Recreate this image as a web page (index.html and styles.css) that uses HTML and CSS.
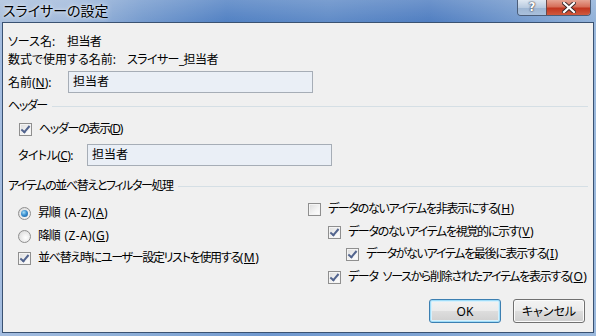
FILE: index.html
```html
<!DOCTYPE html>
<html lang="ja">
<head>
<meta charset="utf-8">
<link rel="stylesheet" href="styles.css">
</head>
<body>
<div class="window">
  <div class="titlebar">
    <div class="title">スライサーの設定</div>
    <div class="caption-buttons">
      <div class="cap-btn help">?</div>
      <div class="cap-btn close">
        <svg width="14" height="11" viewBox="0 0 14 11"><path d="M2 1 L12 10 M12 1 L2 10" stroke="#3a2a2a" stroke-width="4" stroke-linecap="square"/><path d="M2 1 L12 10 M12 1 L2 10" stroke="#ffffff" stroke-width="2.2" stroke-linecap="square"/></svg>
      </div>
    </div>
  </div>
  <div class="client">
    <div class="row"><span class="lbl w59">ソース名:</span><span class="kana">担当者</span></div>
    <div class="row"><span class="lbl w119">数式で使用する名前:</span><span class="kana">スライサー_担当者</span></div>
    <div class="field-row name-row"><span class="lbl w60">名前(<u>N</u>):</span><div class="input">担当者</div></div>

    <div class="group group-header"><span class="group-label">ヘッダー</span><span class="group-line"></span></div>
    <div class="opt indent1 show-header"><span class="cb checked"></span><span>ヘッダーの表示(<u>D</u>)</span></div>
    <div class="field-row title-row"><span class="lbl w69 kana">タイトル(<u>C</u>):</span><div class="input">担当者</div></div>

    <div class="group group-sort"><span class="group-label">アイテムの並べ替えとフィルター処理</span><span class="group-line"></span></div>
    <div class="cols">
      <div class="col-left">
        <div class="opt r1"><span class="radio on"></span><span>昇順<span class="gap"> </span><span class="lat">(A-Z)(<u>A</u>)</span></span></div>
        <div class="opt r2"><span class="radio"></span><span>降順<span class="gap"> </span><span class="lat">(Z-A)(<u>G</u>)</span></span></div>
        <div class="opt r3"><span class="cb checked"></span><span>並べ替え時にユーザー設定リストを使用する<span class="lat">(<u>M</u>)</span></span></div>
      </div>
      <div class="col-right">
        <div class="opt c1"><span class="cb"></span><span>データのないアイテムを非表示にする<span class="lat">(<u>H</u>)</span></span></div>
        <div class="opt c2 lvl1"><span class="cb checked"></span><span>データのないアイテムを視覚的に示す<span class="lat">(<u>V</u>)</span></span></div>
        <div class="opt c3 lvl2"><span class="cb checked"></span><span>データがないアイテムを最後に表示する<span class="lat">(<u>I</u>)</span></span></div>
        <div class="opt c4 lvl1"><span class="cb checked"></span><span>データ<span class="gap"> </span>ソースから削除されたアイテムを表示する<span class="lat">(<u>O</u>)</span></span></div>
      </div>
    </div>
    <div class="buttons">
      <div class="btn default">OK</div>
      <div class="btn">キャンセル</div>
    </div>
  </div>
</div>
</body>
</html>
```

FILE: styles.css
```css
html, body {
  margin: 0;
  padding: 0;
}
body {
  width: 596px;
  height: 336px;
  overflow: hidden;
  font-family: "Noto Sans", "Noto Sans CJK JP", sans-serif;
  font-size: 12px;
  font-feature-settings: "palt";
  color: #000;
}
.window {
  width: 596px;
  height: 336px;
  display: flex;
  flex-direction: column;
  background: linear-gradient(90deg, #a4bde0 0%, #8fb0d8 20%, #6f98cf 45%, #7ea3d3 70%, #9ab8dc 100%);
}
.titlebar {
  height: 22px;
  display: flex;
  align-items: flex-start;
  background:
    linear-gradient(180deg, rgba(255,255,255,0.18) 0%, rgba(255,255,255,0.02) 100%),
    linear-gradient(90deg, #a9bfdc 0%, #9fb8da 12%, #7399cd 24%, #4f7fc2 38%, #5d89c6 55%, #4d7cc0 72%, #6b93ca 85%, #8fb0d8 100%);
}
.title {
  font-size: 14px;
  line-height: 22px;
  padding-left: 3px;
  color: #000;
  text-shadow: 0 0 6px rgba(255,255,255,0.7), 0 0 3px rgba(255,255,255,0.7);
}
.caption-buttons {
  margin-left: auto;
  margin-right: 5px;
  display: flex;
  height: 15px;
  border: 1px solid #4b5d78;
  border-top: none;
  border-radius: 0 0 4px 4px;
  overflow: hidden;
}
.cap-btn {
  height: 15px;
  display: flex;
  align-items: center;
  justify-content: center;
}
.help {
  width: 28px;
  background: linear-gradient(180deg, #dfe8f2 0%, #b9cbe0 50%, #9db5d2 51%, #aac0dc 100%);
  color: #fff;
  font-family: "DejaVu Sans", sans-serif;
  font-weight: bold;
  font-size: 12px;
  line-height: 15px;
  text-shadow: 0 0 2px #334, 0 0 1px #223;
  border-right: 1px solid #6b4a4a;
}
.close {
  width: 43px;
  background: linear-gradient(180deg, #e6a493 0%, #d66f59 45%, #c2361f 55%, #cf5a3f 100%);
}
.client {
  flex: 1;
  margin: 0 2px 3px 2px;
  border: 1px solid #3a5272;
  background: #f0f0f0;
  padding: 10px 0 0 5px;
  position: relative;
}
.row {
  height: 18px;
  line-height: 18px;
  display: flex;
  white-space: nowrap;
}
.lbl {
  display: inline-block;
  flex: none;
}
.w59 { width: 59px; }
.w119 { width: 119px; }
.w60 { width: 60px; }
.w69 { width: 69px; }
.kana { letter-spacing: -0.6px; }
.lat { letter-spacing: 0.4px; }
.gap { display: inline-block; width: 5px; }
u { text-decoration: underline; text-underline-offset: 1px; }
.field-row {
  display: flex;
  align-items: center;
  height: 22px;
  white-space: nowrap;
}
.name-row { margin-top: 2px; }
.title-row { margin-top: 6px; padding-left: 10px; }
.input {
  height: 20px;
  border: 1px solid #a6adb6;
  background: #eaeff6;
  line-height: 20px;
  padding-left: 4px;
  width: 239px;
}
.group {
  display: flex;
  align-items: center;
  height: 18px;
  margin-right: 5px;
}
.group-header { margin-top: 4px; }
.group-sort { margin-top: 11px; }
.group-label {
  white-space: nowrap;
  line-height: 18px;
  letter-spacing: -1.4px;
}
.group-line {
  flex: 1;
  height: 1px;
  background: #d5dfe5;
  margin-left: 5px;
}
.opt {
  display: flex;
  align-items: center;
  height: 18px;
  line-height: 18px;
  white-space: nowrap;
}
.opt > span:last-child { margin-left: 7px; letter-spacing: -1.3px; }
.opt .lat { letter-spacing: 0.4px; }
.indent1 { padding-left: 11px; }
.show-header { margin-top: 5px; }
.cb {
  width: 11px;
  height: 11px;
  border: 1px solid #8f8f8f;
  background: linear-gradient(135deg, #dcdcdc 0%, #f4f4f4 60%, #ffffff 100%);
  box-shadow: inset 0 0 0 1px #f4f4f4;
  position: relative;
  flex: none;
}
.cb.checked::after {
  content: "";
  position: absolute;
  left: 3px;
  top: 0px;
  width: 3px;
  height: 7px;
  border-right: 2px solid #52648e;
  border-bottom: 2px solid #52648e;
  transform: rotate(40deg);
  transform-origin: center;
}
.radio {
  width: 11px;
  height: 11px;
  border: 1px solid #8f8f8f;
  border-radius: 50%;
  background: radial-gradient(circle at 60% 60%, #ffffff 0%, #e6e6e6 60%, #cfcfcf 100%);
  position: relative;
  flex: none;
}
.radio.on::after {
  content: "";
  position: absolute;
  left: 2px;
  top: 2px;
  width: 7px;
  height: 7px;
  border-radius: 50%;
  background: radial-gradient(circle at 40% 35%, #a7e0f7 0%, #3b8fd0 45%, #155b99 100%);
}
.cols {
  display: flex;
}
.col-left {
  width: 290px;
  margin-left: 10px;
  flex: none;
}
.r1 { margin-top: 9px; }
.r2 { margin-top: 5px; }
.r3 { margin-top: 4px; }
.col-right { flex: 1; }
.c1 { margin-top: 5px; }
.c2 { margin-top: 5px; }
.c3 { margin-top: 4px; }
.c4 { margin-top: 5px; }
.lvl1 { padding-left: 20px; }
.lvl2 { padding-left: 38px; }
.buttons {
  display: flex;
  justify-content: flex-end;
  gap: 12px;
  margin-top: 13px;
  margin-right: 8px;
}
.btn {
  width: 70px;
  height: 22px;
  border: 1px solid #707070;
  border-radius: 3px;
  background: linear-gradient(180deg, #f3f3f3 0%, #ebebeb 48%, #dddddd 52%, #cfcfcf 100%);
  box-shadow: inset 0 0 0 1px #fbfbfb;
  display: flex;
  align-items: center;
  justify-content: center;
  font-size: 12px;
}
.btn.default {
  border-color: #3c7fb1;
  box-shadow: inset 0 0 0 1px #9fdcf8, inset 0 0 0 2px #d8f0fb;
}
```
